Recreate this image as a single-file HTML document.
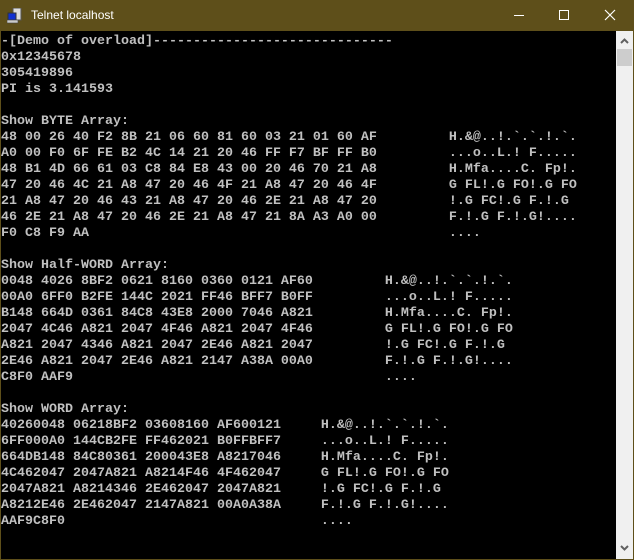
<!DOCTYPE html>
<html><head><style>
html,body{margin:0;padding:0;background:#5e4f1a;width:634px;height:560px;overflow:hidden}
#tb{position:absolute;left:0;top:0;width:634px;height:31px;background:#5e4f1a;color:#fff;font:12px "Liberation Sans",sans-serif}
#term{position:absolute;left:1px;top:31px;width:615px;height:528px;background:#000;overflow:hidden}
pre{margin:0;padding:0;position:absolute;left:0;top:3px;font-family:"Liberation Mono",monospace;font-size:13.33px;line-height:16px;color:#c0c0c0;font-weight:bold;letter-spacing:0}
#sb{position:absolute;left:616px;top:31px;width:17px;height:528px;background:#f0f0f0}
#th{position:absolute;left:1px;top:18px;width:15px;height:17px;background:#cdcdcd}
</style></head><body>
<div id="tb">
<svg style="position:absolute;left:7px;top:8px" width="16" height="16" viewBox="0 0 16 16"><rect x="6" y="0" width="8" height="12" fill="#ddd" stroke="#555" stroke-width="1"/><rect x="1" y="5" width="8" height="7" fill="#1030d0" stroke="#333"/><rect x="0" y="12" width="11" height="3" fill="#ccc" stroke="#444" stroke-width="0.6"/></svg>
<span style="position:absolute;left:31px;top:8px">Telnet localhost</span>
<div style="position:absolute;left:514px;top:15px;width:10px;height:1px;background:#fff"></div>
<div style="position:absolute;left:559px;top:10px;width:8px;height:8px;border:1px solid #fff"></div>
<svg style="position:absolute;left:604px;top:9px" width="12" height="12" viewBox="0 0 12 12"><path d="M1 1L11 11M11 1L1 11" stroke="#fff" stroke-width="1.2"/></svg>
</div>
<div id="term"><pre>-[Demo of overload]------------------------------
0x12345678
305419896
PI is 3.141593

Show BYTE Array:
48 00 26 40 F2 8B 21 06 60 81 60 03 21 01 60 AF         H.&amp;@..!.`.`.!.`.
A0 00 F0 6F FE B2 4C 14 21 20 46 FF F7 BF FF B0         ...o..L.! F.....
48 B1 4D 66 61 03 C8 84 E8 43 00 20 46 70 21 A8         H.Mfa....C. Fp!.
47 20 46 4C 21 A8 47 20 46 4F 21 A8 47 20 46 4F         G FL!.G FO!.G FO
21 A8 47 20 46 43 21 A8 47 20 46 2E 21 A8 47 20         !.G FC!.G F.!.G 
46 2E 21 A8 47 20 46 2E 21 A8 47 21 8A A3 A0 00         F.!.G F.!.G!....
F0 C8 F9 AA                                             ....

Show Half-WORD Array:
0048 4026 8BF2 0621 8160 0360 0121 AF60         H.&amp;@..!.`.`.!.`.
00A0 6FF0 B2FE 144C 2021 FF46 BFF7 B0FF         ...o..L.! F.....
B148 664D 0361 84C8 43E8 2000 7046 A821         H.Mfa....C. Fp!.
2047 4C46 A821 2047 4F46 A821 2047 4F46         G FL!.G FO!.G FO
A821 2047 4346 A821 2047 2E46 A821 2047         !.G FC!.G F.!.G 
2E46 A821 2047 2E46 A821 2147 A38A 00A0         F.!.G F.!.G!....
C8F0 AAF9                                       ....

Show WORD Array:
40260048 06218BF2 03608160 AF600121     H.&amp;@..!.`.`.!.`.
6FF000A0 144CB2FE FF462021 B0FFBFF7     ...o..L.! F.....
664DB148 84C80361 200043E8 A8217046     H.Mfa....C. Fp!.
4C462047 2047A821 A8214F46 4F462047     G FL!.G FO!.G FO
2047A821 A8214346 2E462047 2047A821     !.G FC!.G F.!.G 
A8212E46 2E462047 2147A821 00A0A38A     F.!.G F.!.G!....
AAF9C8F0                                ....</pre></div>
<div id="sb"><div id="th"></div>
<svg style="position:absolute;left:4px;top:7px" width="9" height="6" viewBox="0 0 9 6"><path d="M1 5L4.5 1.5L8 5" stroke="#606060" stroke-width="2" fill="none"/></svg>
<svg style="position:absolute;left:4px;top:514px" width="9" height="6" viewBox="0 0 9 6"><path d="M1 1L4.5 4.5L8 1" stroke="#606060" stroke-width="2" fill="none"/></svg>
</div>
</body></html>
